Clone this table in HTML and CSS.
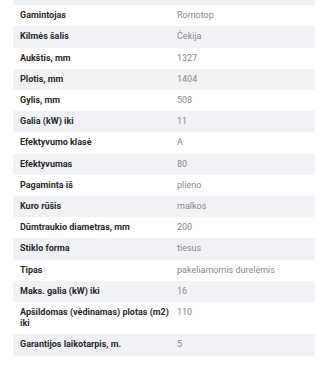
FILE: index.html
```html
<!DOCTYPE html>
<html lang="lt">
<head>
    <meta charset="UTF-8">
    <meta name="viewport" content="width=device-width, initial-scale=1.0">
    <title>Savybės</title>
    <link rel="stylesheet" href="styles.css">
</head>
<body>
    <div class="specs">
        <table class="specs-table">
            <tbody>
                <tr><th>Spalva</th><td></td></tr>
                <tr><th>Gamintojas</th><td>Romotop</td></tr>
                <tr><th>Kilmės šalis</th><td>Čekija</td></tr>
                <tr><th>Aukštis, mm</th><td>1327</td></tr>
                <tr><th>Plotis, mm</th><td>1404</td></tr>
                <tr><th>Gylis, mm</th><td>508</td></tr>
                <tr><th>Galia (kW) iki</th><td>11</td></tr>
                <tr><th>Efektyvumo klasė</th><td>A</td></tr>
                <tr><th>Efektyvumas</th><td>80</td></tr>
                <tr><th>Pagaminta iš</th><td>plieno</td></tr>
                <tr><th>Kuro rūšis</th><td>malkos</td></tr>
                <tr><th>Dūmtraukio diametras, mm</th><td>200</td></tr>
                <tr><th>Stiklo forma</th><td>tiesus</td></tr>
                <tr><th>Tipas</th><td>pakeliamomis durelėmis</td></tr>
                <tr><th>Maks. galia (kW) iki</th><td>16</td></tr>
                <tr><th>Apšildomas (vėdinamas) plotas (m2) iki</th><td>110</td></tr>
                <tr><th>Garantijos laikotarpis, m.</th><td>5</td></tr>
            </tbody>
        </table>
    </div>
</body>
</html>
```

FILE: styles.css
```css
body {
    margin: 0;
    background-color: #ffffff;
    font-family: Roboto, "Noto Sans", Arial, sans-serif;
    overflow: hidden;
}
.specs {
    margin-top: -16px;
    padding-left: 13px;
}
.specs-table {
    width: 100%;
    border-collapse: collapse;
    font-size: 9px;
    line-height: 11.2px;
}
.specs-table tr:nth-child(odd) {
    background-color: #f1f2f6;
}
.specs-table th,
.specs-table td {
    padding: 5px 4px 5px 7px;
    text-align: left;
    vertical-align: top;
}
.specs-table th {
    width: 153px;
    padding-right: 0;
    font-weight: 700;
    color: #2a2a2a;
}
.specs-table td {
    padding-left: 4px;
    font-weight: 400;
    color: #8a8a8a;
}
```
